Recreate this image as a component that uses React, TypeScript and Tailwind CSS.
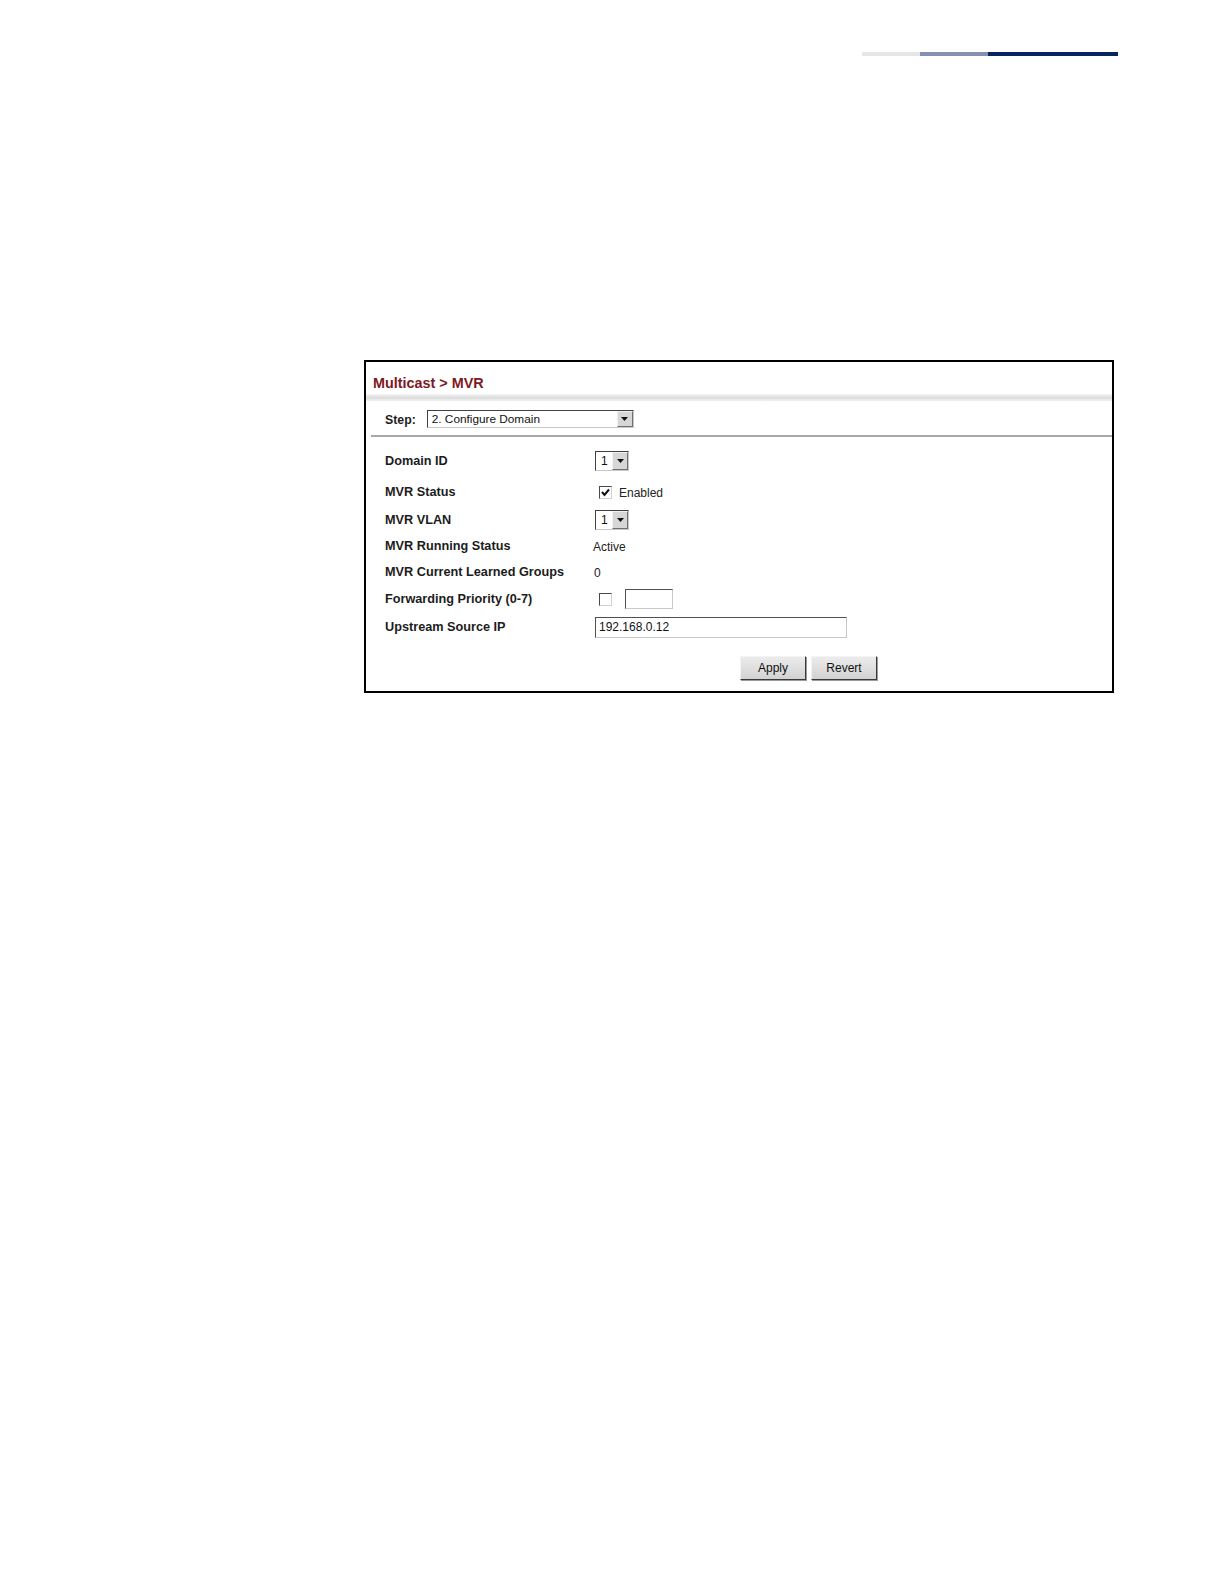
import React from "react";

const labelCls = "w-[210px] shrink-0 pt-[2px] text-[12.7px] font-bold text-[#1c1c1c]";
const valueFont = { fontFamily: '"Liberation Sans", Arial, sans-serif' };

function Arrow({ className = "" }: { className?: string }) {
  return (
    <div
      className={`flex items-center justify-center bg-[#d6d6d6] border-l border-l-[#f2f2f2] border-t border-t-[#f2f2f2] border-r border-r-[#707070] border-b border-b-[#707070] ${className}`}
    >
      <svg width="7" height="4" viewBox="0 0 7 4">
        <path d="M0 0 L7 0 L3.5 4 Z" fill="#111" />
      </svg>
    </div>
  );
}

function SmallSelect({ value }: { value: string }) {
  return (
    <div className="flex h-[20px] w-[34px] items-stretch border border-t-[#404040] border-l-[#404040] border-r-[#c8c8c8] border-b-[#c8c8c8] bg-white">
      <span className="flex-1 pl-[5px] text-[12px] leading-[18px] text-[#111]">{value}</span>
      <Arrow className="w-[16px]" />
    </div>
  );
}

function Checkbox({ checked }: { checked: boolean }) {
  return (
    <div className="flex h-[13px] w-[13px] items-center justify-center border border-t-[#4a4a4a] border-l-[#4a4a4a] border-r-[#d0d0d0] border-b-[#d0d0d0] bg-white">
      {checked && (
        <svg width="9" height="9" viewBox="0 0 9 9">
          <path d="M1 4 L3.5 7 L8 1.5" stroke="#111" strokeWidth="2" fill="none" />
        </svg>
      )}
    </div>
  );
}

function Row({ label, mt, children }: { label: string; mt: string; children?: React.ReactNode }) {
  return (
    <div className={`flex h-[26px] items-center pl-[19px] ${mt}`}>
      <div className={labelCls}>{label}</div>
      <div className="flex items-center">{children}</div>
    </div>
  );
}

function Button({ label }: { label: string }) {
  return (
    <div className="flex h-[24px] w-[66px] items-center justify-center bg-gradient-to-b from-[#ececec] to-[#d2d2d2] border border-t-[#f4f4f4] border-l-[#f4f4f4] border-r-[#3a3a3a] border-b-[#3a3a3a] text-[12px] text-[#111] shadow-[1px_1px_0_#9a9a9a]">
      {label}
    </div>
  );
}

export default function App() {
  return (
    <div className="relative h-[1584px] w-[1224px] bg-white pt-[52px]" style={valueFont}>
      {/* header rule */}
      <div className="ml-[862px] flex h-[4px] w-[256px]">
        <div className="w-[58px] bg-[#e6e6e8]" />
        <div className="w-[68px] bg-[#8690b0]" />
        <div className="flex-1 bg-[#0a2460]" />
      </div>

      {/* MVR panel */}
      <div className="ml-[364px] mt-[304px] h-[333px] w-[750px] border-2 border-black bg-white">
        <div className="h-[32px] pl-[7px] pt-[12px] text-[14.4px] font-bold leading-[18px] text-[#7d1a1e]">
          Multicast &gt; MVR
        </div>
        <div className="h-[7px] bg-gradient-to-b from-[#f6f6f6] via-[#dcdcdc] to-[#f0f0f0]" />

        <div className="flex h-[34px] items-start pl-[19px] pt-[9px]">
          <span className="mr-[11px] pt-[1px] text-[12.3px] font-bold leading-[18px] text-[#1c1c1c]">Step:</span>
          <div className="flex h-[18px] w-[207px] items-stretch border border-t-[#404040] border-l-[#404040] border-r-[#c8c8c8] border-b-[#c8c8c8] bg-white">
            <span className="flex-1 pl-[4px] text-[11.8px] leading-[17px] text-[#111]">2. Configure Domain</span>
            <Arrow className="w-[16px]" />
          </div>
        </div>
        <div className="ml-[5px] h-[2px] bg-[#a8a8a8]" />

        <Row label="Domain ID" mt="mt-[11px]">
          <SmallSelect value="1" />
        </Row>
        <Row label="MVR Status" mt="mt-[5px]">
          <div className="ml-[4px] flex items-center gap-[7px]">
            <Checkbox checked />
            <span className="pt-[2px] text-[12px] text-[#222]">Enabled</span>
          </div>
        </Row>
        <Row label="MVR VLAN" mt="mt-[2px]">
          <SmallSelect value="1" />
        </Row>
        <Row label="MVR Running Status" mt="mt-0">
          <span className="-ml-[2px] pt-[2px] text-[12px] text-[#222]">Active</span>
        </Row>
        <Row label="MVR Current Learned Groups" mt="mt-0">
          <span className="-ml-[1px] pt-[2px] text-[12px] text-[#222]">0</span>
        </Row>
        <Row label="Forwarding Priority (0-7)" mt="mt-[1px]">
          <div className="ml-[4px] flex items-center gap-[13px]">
            <Checkbox checked={false} />
            <div className="h-[20px] w-[48px] border border-t-[#505050] border-l-[#505050] border-r-[#c8c8c8] border-b-[#c8c8c8] bg-white" />
          </div>
        </Row>
        <Row label="Upstream Source IP" mt="mt-[2px]">
          <div className="h-[21px] w-[252px] border border-t-[#505050] border-l-[#505050] border-r-[#c8c8c8] border-b-[#c8c8c8] bg-white pl-[3px] text-[12px] leading-[19px] text-[#111]">
            192.168.0.12
          </div>
        </Row>

        <div className="mt-[16px] flex gap-[5px] pl-[374px]">
          <Button label="Apply" />
          <Button label="Revert" />
        </div>
      </div>
    </div>
  );
}
